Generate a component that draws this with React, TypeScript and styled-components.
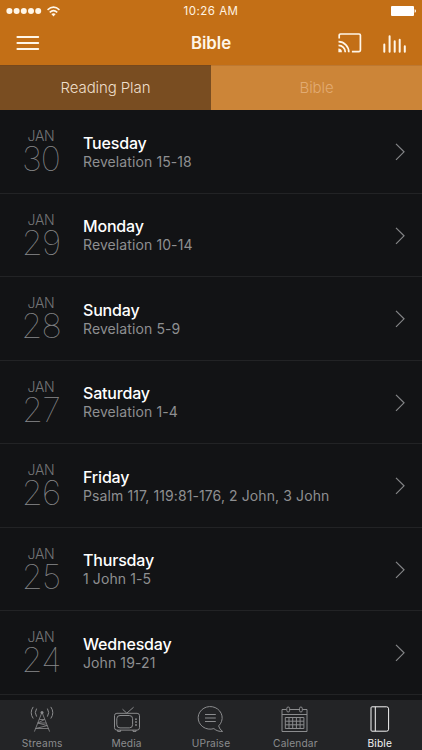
import React from 'react';
import styled, { createGlobalStyle } from 'styled-components';

const GlobalStyle = createGlobalStyle`
  * { box-sizing: border-box; }
  body { margin: 0; background: #121315; }
`;

const Screen = styled.div`
  display: flex;
  flex-direction: column;
  width: 422px;
  height: 750px;
  overflow: hidden;
  background: #121315;
  color: #fff;
  font-family: Inter, 'Liberation Sans', sans-serif;
`;

const StatusBar = styled.div`
  display: grid;
  grid-template-columns: 1fr auto 1fr;
  align-items: center;
  height: 22px;
  padding: 0 6px;
  flex: none;
  background: #c36f16;
`;

const Signal = styled.div`
  display: flex;
  align-items: center;
  gap: 5px;
  svg { display: block; }
`;

const Clock = styled.span`
  font-size: 11.5px;
  line-height: 22px;
  letter-spacing: 0.5px;
  color: #fff3e2;
`;

const Battery = styled.div`
  justify-self: end;
  svg { display: block; }
`;

const NavBar = styled.header`
  display: grid;
  grid-template-columns: 1fr auto 1fr;
  align-items: center;
  height: 43px;
  padding: 0 15px 0 16px;
  flex: none;
  background: #c36f16;
  svg { display: block; }
`;

const NavTitle = styled.h1`
  margin: 0 1px 1px 0;
  font-size: 16.8px;
  line-height: 22px;
  font-weight: 600;
  letter-spacing: 0;
  color: #fff6e8;
`;

const NavActions = styled.div`
  display: flex;
  justify-self: end;
  align-items: center;
  gap: 21px;
`;

const IconButton = styled.button`
  display: block;
  width: max-content;
  padding: 0;
  border: 0;
  background: none;
  color: #fff6e8;
`;

const MenuButton = styled(IconButton)`
  margin-top: -1px;
`;

const CastButton = styled(IconButton)`
  margin-top: -1px;
`;

const Segments = styled.div`
  display: grid;
  grid-template-columns: 1fr 1fr;
  height: 45px;
  flex: none;
`;

const Segment = styled.button<{ $active?: boolean }>`
  border: 0;
  border-top: 1px solid ${p => (p.$active ? '#75481d' : '#bd7831')};
  padding: 0;
  background: ${p => (p.$active ? '#794d21' : '#cc8538')};
  color: ${p => (p.$active ? '#efdfcb' : '#e2ab72')};
  font: 300 15px/44px Inter, 'Liberation Sans', sans-serif;
  letter-spacing: -0.1px;
`;

const List = styled.div`
  flex: 1;
  min-height: 0;
`;

const Row = styled.div`
  display: grid;
  grid-template-columns: 83px 1fr 27px;
  height: 83.5px;
  border-bottom: 1px solid #222325;
`;

const DateBlock = styled.div`
  padding: 17px 1px 0 0;
  text-align: center;
  color: #747577;
`;

const Month = styled.div`
  font-size: 14px;
  line-height: 18px;
  font-weight: 300;
  letter-spacing: -0.3px;
`;

const Day = styled.div`
  font-size: 34px;
  line-height: 28px;
  font-weight: 100;
  letter-spacing: -0.9px;
  color: #88898b;
`;

const Reading = styled.div`
  padding-top: 22.5px;
  white-space: nowrap;
`;

const Weekday = styled.div`
  font-size: 16px;
  line-height: 20px;
  font-weight: 500;
  letter-spacing: -0.18px;
  color: #fff;
`;

const Passage = styled.div`
  font-size: 14px;
  line-height: 18px;
  letter-spacing: 0.1px;
  color: #8e8f91;
`;

const Disclosure = styled.div`
  padding-top: 33px;
  svg { display: block; }
`;

const TabBar = styled.nav`
  display: grid;
  grid-template-columns: repeat(5, 1fr);
  height: 50px;
  flex: none;
  background: #232426;
`;

const Tab = styled.button<{ $active?: boolean }>`
  display: flex;
  flex-direction: column;
  align-items: center;
  padding: 5px 0 0;
  border: 0;
  background: none;
  color: ${p => (p.$active ? '#f4f4f4' : '#8b8c8e')};
  font: 400 10.2px/13px Inter, 'Liberation Sans', sans-serif;
  letter-spacing: 0.15px;
  svg { display: block; margin-bottom: 4px; }
`;

const readings = [
  { day: 30, name: 'Tuesday', text: 'Revelation 15-18' },
  { day: 29, name: 'Monday', text: 'Revelation 10-14' },
  { day: 28, name: 'Sunday', text: 'Revelation 5-9' },
  { day: 27, name: 'Saturday', text: 'Revelation 1-4' },
  { day: 26, name: 'Friday', text: 'Psalm 117, 119:81-176, 2 John, 3 John' },
  { day: 25, name: 'Thursday', text: '1 John 1-5' },
  { day: 24, name: 'Wednesday', text: 'John 19-21' },
];

const line = { fill: 'none', stroke: 'currentColor', strokeWidth: 1 } as const;

const StreamsIcon = () => (
  <svg width="28" height="28" viewBox="0 0 28 28" {...line}>
    <circle cx="14" cy="7.6" r="1.5" fill="currentColor" stroke="none" />
    <path d="M13.7 8 6.4 26.6M14.3 8l7.3 18.6M11.4 14.5h5.2L9.8 18l9.4 2.6L7.6 23.5M9.8 18h8.4M7.6 23.5h13" strokeWidth=".8" />
    <path d="M8.6 3.6q-2.6 4 0 8M5.2 1.9q-4 5.8 0 11.6M19.4 3.6q2.6 4 0 8M22.8 1.9q4 5.8 0 11.6" />
  </svg>
);

const MediaIcon = () => (
  <svg width="28" height="28" viewBox="0 0 28 28" {...line}>
    <path d="m9.5 4.2 4.3 4L20.6 2.2" />
    <rect x="1.5" y="8.3" width="25" height="16.8" rx="2.4" />
    <rect x="3.8" y="10.5" width="15.8" height="12.4" rx="3.2" />
    <path d="M4.6 25v1.4h3V25M20 25v1.4h3V25" />
    <g fill="currentColor" stroke="none"><circle cx="23" cy="14.2" r=".9" /><circle cx="23" cy="17" r=".9" /><circle cx="23" cy="20" r=".9" /></g>
  </svg>
);

const PraiseIcon = () => (
  <svg width="28" height="28" viewBox="0 0 28 28" {...line}>
    <path d="M21.6 20.9A12 11.3 0 1 0 16.9 23.6C19.2 25.7 22.4 26.7 25.6 26.4Q22.4 24.3 21.6 20.9Z" strokeLinejoin="round" />
    <path d="M8 9.5h10.8M8 13h10.8M8 16.5h10.8" />
  </svg>
);

const CalendarIcon = () => (
  <svg width="28" height="28" viewBox="0 0 28 28" {...line}>
    <path d="M5.4 4.5H1v22h25v-22h-4.4M8.9 4.5h9.3M1 9.5h25" />
    <rect x="5.8" y="2" width="2.8" height="5" rx="1.4" />
    <rect x="18.5" y="2" width="2.8" height="5" rx="1.4" />
    <path d="M4.3 12.5h18.6v11H4.3zM4.3 16.2h18.6M4.3 19.8h18.6M8 12.5v11M11.7 12.5v11M15.4 12.5v11M19.1 12.5v11" />
  </svg>
);

const BookIcon = () => (
  <svg width="28" height="28" viewBox="0 0 28 28" {...line}>
    <path d="M6 1.8h14.6q2 0 2 2v20.4q0 2-2 2H6q-1 0-1-1V2.8q0-1 1-1z" />
    <path d="M9.3 1.8v24.4" />
  </svg>
);

const tabs = [
  { name: 'Streams', Icon: StreamsIcon },
  { name: 'Media', Icon: MediaIcon },
  { name: 'UPraise', Icon: PraiseIcon },
  { name: 'Calendar', Icon: CalendarIcon },
  { name: 'Bible', Icon: BookIcon },
];

export default function App() {
  return (
    <Screen>
      <GlobalStyle />
      <StatusBar>
        <Signal>
          <svg width="36" height="8" viewBox="0 0 36 8" fill="#fff6e8">
            {[0, 1, 2, 3, 4].map(i => <circle key={i} cx={3.4 + i * 7.2} cy="4" r="3" />)}
          </svg>
          <svg width="13" height="11" viewBox="0 0 12 10" fill="none" stroke="#fff6e8" strokeWidth="1.4">
            <path d="M.5 3.5q5.5-5 11 0M2.5 5.8q3.5-3.2 7 0" />
            <path d="M4 7.4q2-1.6 4 0L6 9.6z" fill="#fff6e8" stroke="none" />
          </svg>
        </Signal>
        <Clock>10:26 AM</Clock>
        <Battery>
          <svg width="26" height="12" viewBox="0 0 26 12" fill="#fff">
            <rect x="1" y="1" width="23" height="10" rx="1" />
            <path d="M24.6 4.2q1.4.3 1.4 1.8t-1.4 1.8z" />
          </svg>
        </Battery>
      </StatusBar>
      <NavBar>
        <MenuButton aria-label="Menu">
          <svg width="24" height="16" viewBox="0 0 24 16" stroke="currentColor" strokeWidth="2" strokeLinecap="round">
            <path d="M1.4 2h20.8M1.4 8h20.8M1.4 14h20.8" />
          </svg>
        </MenuButton>
        <NavTitle>Bible</NavTitle>
        <NavActions>
          <CastButton aria-label="Cast">
            <svg width="24" height="20" viewBox="0 0 24 20" fill="none" stroke="currentColor" strokeWidth="1.7">
              <path d="M1.2 5.6V2.3Q1.2 1 2.5 1h18.6q1.3 0 1.3 1.3v15q0 1.3-1.3 1.3h-7.2" />
              <path d="M.5 8.7a10.3 10.3 0 0 1 10.3 10.5M.5 12.3a6.8 6.8 0 0 1 6.8 6.9" />
              <path d="M.4 15.6a3.6 3.6 0 0 1 3.5 3.6H.4z" fill="currentColor" stroke="none" />
            </svg>
          </CastButton>
          <IconButton aria-label="Audio">
            <svg width="24" height="18" viewBox="0 0 24 18" stroke="currentColor" strokeWidth="2" strokeLinecap="round">
              <path d="M1.3 9.5v7.3M6.6 1.3v15.5M11.7 6.3v10.5M16.7 4.8v12M21.8 11.3v5.5" />
            </svg>
          </IconButton>
        </NavActions>
      </NavBar>
      <Segments>
        <Segment $active>Reading Plan</Segment>
        <Segment>Bible</Segment>
      </Segments>
      <List>
        {readings.map(r => (
          <Row key={r.day}>
            <DateBlock>
              <Month>JAN</Month>
              <Day>{r.day}</Day>
            </DateBlock>
            <Reading>
              <Weekday>{r.name}</Weekday>
              <Passage>{r.text}</Passage>
            </Reading>
            <Disclosure>
              <svg width="10" height="18" viewBox="0 0 10 18" fill="none" stroke="#858688" strokeWidth="1.2">
                <path d="m1 .8 8 8-8 8" />
              </svg>
            </Disclosure>
          </Row>
        ))}
      </List>
      <TabBar>
        {tabs.map(({ name, Icon }) => (
          <Tab key={name} $active={name === 'Bible'}>
            <Icon />
            {name}
          </Tab>
        ))}
      </TabBar>
    </Screen>
  );
}
